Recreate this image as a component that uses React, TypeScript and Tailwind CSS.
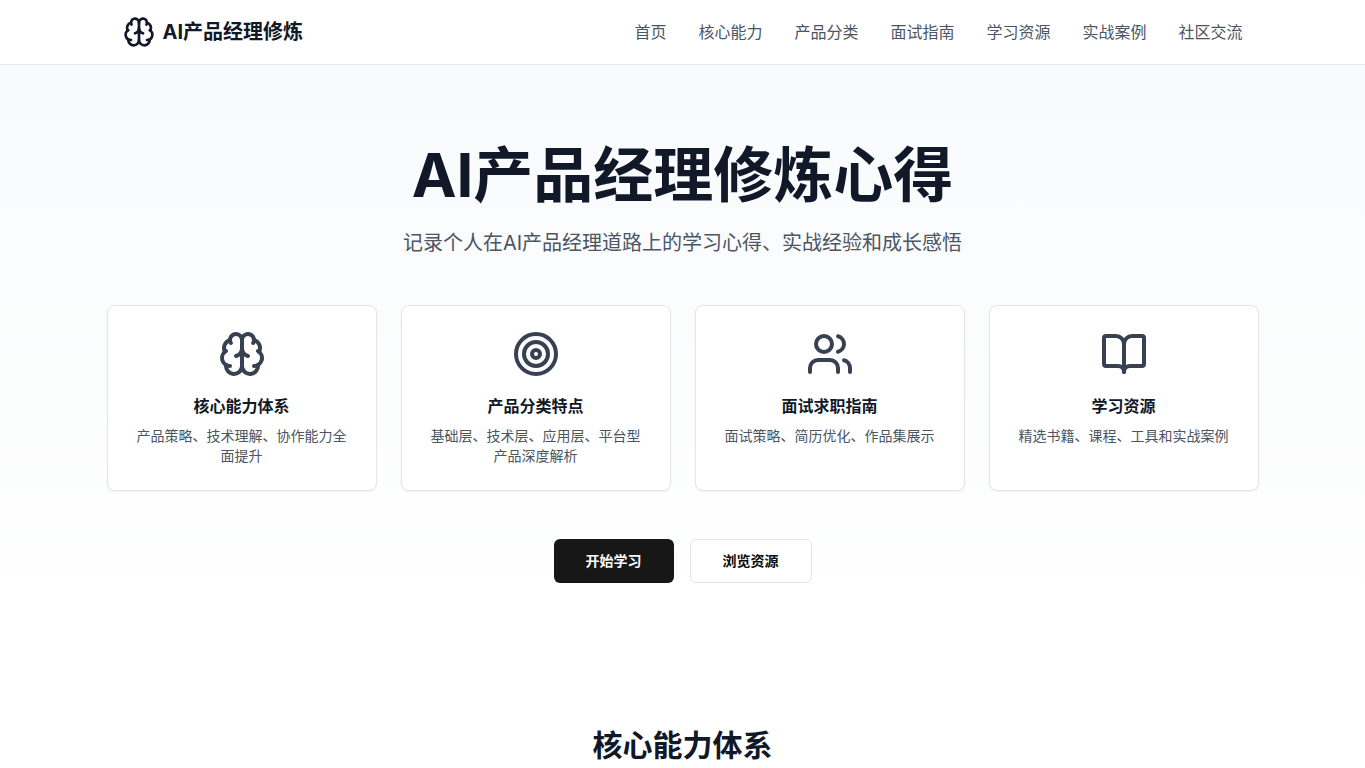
import React from 'react';
import { BookOpen, Brain, Target, Users } from 'lucide-react';

const navItems = [
  { href: '#home', label: '首页' },
  { href: '#skills', label: '核心能力' },
  { href: '#products', label: '产品分类' },
  { href: '#interview', label: '面试指南' },
  { href: '#resources', label: '学习资源' },
  { href: '#cases', label: '实战案例' },
  { href: '#community', label: '社区交流' },
];

const features = [
  { icon: Brain, title: '核心能力体系', desc: '产品策略、技术理解、协作能力全面提升' },
  { icon: Target, title: '产品分类特点', desc: '基础层、技术层、应用层、平台型产品深度解析' },
  { icon: Users, title: '面试求职指南', desc: '面试策略、简历优化、作品集展示' },
  { icon: BookOpen, title: '学习资源', desc: '精选书籍、课程、工具和实战案例' },
];

export default function App() {
  return (
    <div className="min-h-screen bg-white font-['Inter','Noto_Sans_CJK_SC',sans-serif] antialiased">
      <header className="border-b border-gray-200 bg-white">
        <div className="max-w-6xl mx-auto px-4 h-16 flex items-center justify-between">
          <a href="#home" className="flex items-center gap-2">
            <Brain className="h-8 w-8 text-[#111827]" />
            <span className="text-xl font-bold text-[#111827]">AI产品经理修炼</span>
          </a>
          <nav className="flex items-center gap-8">
            {navItems.map((item) => (
              <a key={item.href} href={item.href} className="text-[#4b5563] hover:text-[#111827] transition-colors">
                {item.label}
              </a>
            ))}
          </nav>
        </div>
      </header>

      <main>
        <section id="home" className="bg-gradient-to-b from-gray-50 to-white py-20 px-4">
          <div className="max-w-6xl mx-auto text-center">
            <h1 className="text-6xl font-bold text-[#111827] mb-6">AI产品经理修炼心得</h1>
            <p className="text-xl text-[#4b5563] mb-12">
              记录个人在AI产品经理道路上的学习心得、实战经验和成长感悟
            </p>

            <div className="grid grid-cols-2 lg:grid-cols-4 gap-6 mb-12">
              {features.map(({ icon: Icon, title, desc }) => (
                <div key={title} className="bg-white rounded-lg border border-neutral-200 shadow-xs p-6">
                  <Icon className="h-12 w-12 mx-auto mb-4 text-[#374151]" />
                  <h3 className="font-semibold text-[#111827] mb-2">{title}</h3>
                  <p className="text-sm text-[#4b5563]">{desc}</p>
                </div>
              ))}
            </div>

            <div className="flex justify-center gap-4">
              <button type="button" className="h-11 px-8 rounded-md bg-neutral-900 text-sm font-semibold text-neutral-50 hover:bg-neutral-800">
                开始学习
              </button>
              <button type="button" className="h-11 px-8 rounded-md border border-neutral-200 bg-white text-sm font-semibold text-neutral-950 hover:bg-neutral-100">
                浏览资源
              </button>
            </div>
          </div>
        </section>

        <section id="skills" className="py-16 px-4">
          <div className="max-w-6xl mx-auto text-center">
            <h2 className="text-3xl font-bold text-[#111827]">核心能力体系</h2>
          </div>
        </section>
      </main>
    </div>
  );
}
